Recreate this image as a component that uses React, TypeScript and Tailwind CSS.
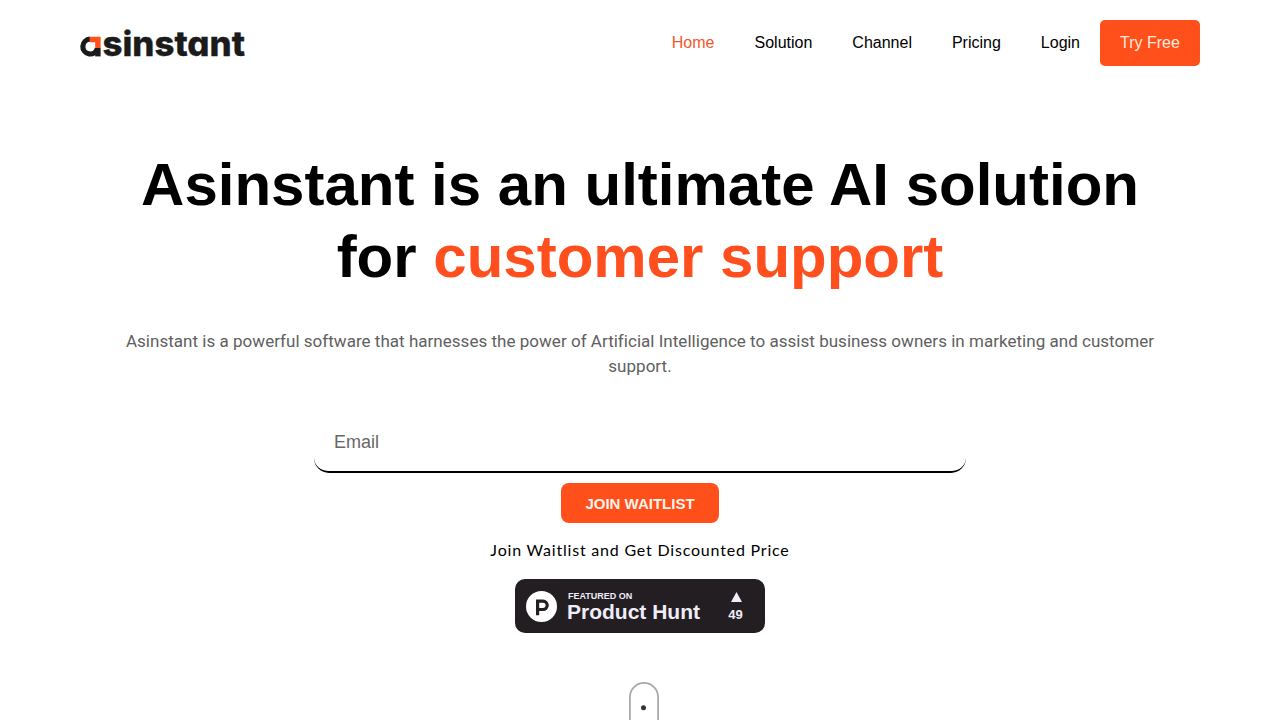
interface NavItem {
  label: string;
  active?: boolean;
}

const navItems: NavItem[] = [
  { label: "Home", active: true },
  { label: "Solution" },
  { label: "Channel" },
  { label: "Pricing" },
  { label: "Login" },
];

const Logo = () => {
  return (
    <svg
      width="170"
      height="46"
      viewBox="0 -7 170 46"
      aria-label="asinstant"
      className="overflow-visible"
    >
      <path
        d="M10 12.2 A7.4 7.4 0 1 0 17.4 21.5"
        fill="none"
        stroke="#1c1b1c"
        strokeWidth="5.2"
      />
      <path d="M15.2 21 H20.6 V29.4 H15.2 Z" fill="#1c1b1c" />
      <path d="M9.6 9.8 H20.6 V21 H15.2 V15.2 H9.6 Z" fill="#ff4f1a" />
      <text
        x="22.5"
        y="29.2"
        textLength="142.5"
        lengthAdjust="spacingAndGlyphs"
        fill="#1c1b1c"
        stroke="#1c1b1c"
        strokeWidth="0.3"
        className="font-['Inter',sans-serif] text-[34px] font-extrabold [font-feature-settings:'cv11']"
      >
        sinstant
      </text>
    </svg>
  );
};

const Navbar = () => {
  return (
    <header className="flex h-[86px] items-center justify-between px-20">
      <Logo />
      <nav className="flex items-center text-base">
        {navItems.map((item) => (
          <a
            key={item.label}
            href="#"
            className={item.active ? "px-5 text-[#f2582c]" : "px-5 text-black"}
          >
            {item.label}
          </a>
        ))}
        <a
          href="#"
          className="flex h-[46px] w-[100px] items-center justify-center rounded-[5px] bg-[#ff4f1a] text-[#ffeade]"
        >
          Try Free
        </a>
      </nav>
    </header>
  );
};

const ProductHuntBadge = () => {
  return (
    <a
      href="#"
      className="mt-[17px] flex h-[54px] w-[250px] items-center rounded-[10px] bg-[#221e21] pl-[11px] text-[#f0ecfa]"
    >
      <svg width="31" height="31" viewBox="0 0 31 31">
        <circle cx="15.5" cy="15.5" r="15.5" fill="#fff" />
        <path
          d="M11.6 24.3 V10.1 H17 A4.2 4.2 0 0 1 17 18.5 H11.6"
          fill="none"
          stroke="#221e21"
          strokeWidth="3.2"
        />
      </svg>
      <div className="ml-[10px] w-[140px] pt-[2px] font-bold">
        <div className="ml-px text-[9px] leading-[10px]">FEATURED ON</div>
        <div className="text-[21px] leading-[22px] whitespace-nowrap">
          Product Hunt
        </div>
      </div>
      <div className="ml-[19px] flex w-[19px] flex-col items-center pt-[2px] font-bold">
        <svg
          width="11"
          height="10"
          viewBox="0 0 11 10"
          className="ml-px block"
        >
          <path d="M5.5 0 L11 10 H0 Z" fill="currentColor" />
        </svg>
        <div className="mt-[5px] text-[13px] leading-[15px]">49</div>
      </div>
    </a>
  );
};

const Hero = () => {
  return (
    <main className="flex flex-col items-center px-20">
      <h1 className="mt-[63px] text-center text-[60px] leading-[72px] font-bold text-black">
        Asinstant is an ultimate AI solution
        <br />
        for <span className="text-[#ff4f1f]">customer support</span>
      </h1>
      <p className="mt-[36px] w-[1060px] text-center font-['Roboto',sans-serif] text-[17px] leading-[25px] tracking-[0.025px] text-[#606060]">
        Asinstant is a powerful software that harnesses the power of Artificial
        Intelligence to assist business owners in marketing and customer
        support.
      </p>
      <form className="mt-[33px] flex flex-col items-center">
        <input
          type="email"
          placeholder="Email"
          className="h-[61px] w-[652px] rounded-[15px] border-b-2 border-black px-5 pt-[2px] text-[18px] placeholder:text-[#666]"
        />
        <button
          type="button"
          className="mt-[10px] h-10 w-[158px] rounded-lg bg-[#ff4f1a] pt-[2px] text-[15px] font-bold text-[#fff3ea]"
        >
          JOIN WAITLIST
        </button>
      </form>
      <p className="mt-[15px] font-['Lato',sans-serif] text-base leading-6 tracking-[0.8px] whitespace-nowrap text-black">
        Join Waitlist and Get Discounted Price
      </p>
      <ProductHuntBadge />
      <svg
        width="30"
        height="50"
        viewBox="0 0 30 50"
        className="mt-[49px] ml-[7px]"
      >
        <rect
          x="0.9"
          y="0.9"
          width="28.2"
          height="60"
          rx="14.1"
          fill="none"
          stroke="#a8a8a8"
          strokeWidth="1.8"
        />
        <circle cx="14.5" cy="25.7" r="2.5" fill="#333" />
      </svg>
    </main>
  );
};

const App = () => {
  return (
    <div className="h-[720px] w-[1280px] overflow-hidden bg-white font-['Liberation_Sans',Arial,sans-serif]">
      <Navbar />
      <Hero />
    </div>
  );
};

export default App;
